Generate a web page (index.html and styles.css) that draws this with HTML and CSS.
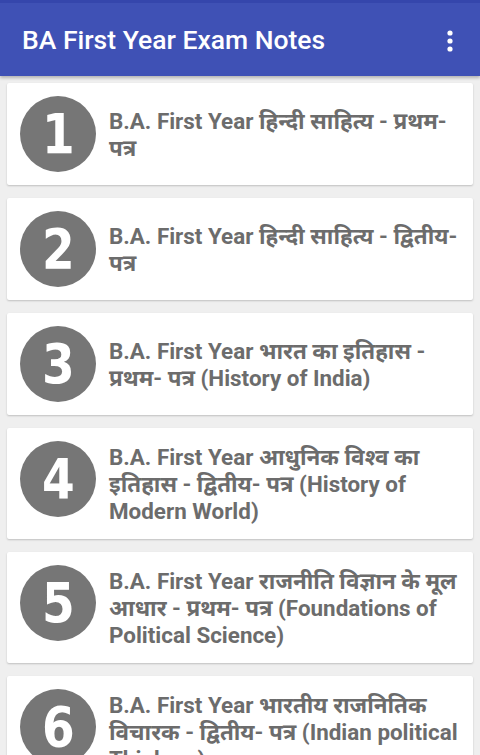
FILE: index.html
```html
<!DOCTYPE html>
<html lang="hi">
<head>
<meta charset="utf-8">
<title>BA First Year Exam Notes</title>
<link rel="stylesheet" href="styles.css">
</head>
<body>
<header class="appbar">
  <h1 class="title">BA First Year Exam Notes</h1>
  <button class="menu" aria-label="More options">
    <svg width="8" height="24" viewBox="0 0 8 24"><circle cx="4" cy="4" r="2.6" fill="#fff"/><circle cx="4" cy="12" r="2.6" fill="#fff"/><circle cx="4" cy="20" r="2.6" fill="#fff"/></svg>
  </button>
</header>
<main class="list">
  <div class="card"><div class="num"><span class="digit">1</span></div><div class="text">B.A. First Year हिन्दी साहित्य - प्रथम- पत्र</div></div>
  <div class="card"><div class="num"><span class="digit">2</span></div><div class="text">B.A. First Year हिन्दी साहित्य - द्वितीय- पत्र</div></div>
  <div class="card"><div class="num"><span class="digit">3</span></div><div class="text">B.A. First Year भारत का इतिहास - प्रथम- पत्र (History of India)</div></div>
  <div class="card"><div class="num"><span class="digit">4</span></div><div class="text">B.A. First Year आधुनिक विश्व का इतिहास - द्वितीय- पत्र (History of Modern World)</div></div>
  <div class="card"><div class="num"><span class="digit">5</span></div><div class="text">B.A. First Year राजनीति विज्ञान के मूल आधार - प्रथम- पत्र (Foundations of Political Science)</div></div>
  <div class="card"><div class="num"><span class="digit">6</span></div><div class="text">B.A. First Year भारतीय राजनितिक विचारक - द्वितीय- पत्र (Indian political Thinkers)</div></div>
</main>
</body>
</html>
```
FILE: styles.css
```css
html, body {
  margin: 0;
  padding: 0;
}
body {
  background: #efefef;
  font-family: Roboto, "Noto Sans", "Noto Sans Devanagari", sans-serif;
  width: 480px;
  height: 755px;
  overflow: hidden;
}
.appbar {
  height: 73px;
  border-top: 3px solid #3546ac;
  background: #3f51b5;
  display: flex;
  align-items: center;
  justify-content: space-between;
  padding: 0 20px 0 22px;
  box-shadow: 0 2px 3px rgba(0,0,0,0.25);
  position: relative;
  z-index: 1;
}
.title {
  margin: 0;
  color: #fff;
  font-size: 26.5px;
  font-weight: 500;
  letter-spacing: 0;
}
.menu {
  background: none;
  border: 0;
  padding: 0;
  width: 20px;
  height: 30px;
  display: flex;
  align-items: center;
  justify-content: center;
  margin-top: 2px;
}
.list {
  display: flex;
  flex-direction: column;
  gap: 13px;
  padding: 7px 7px 0 7px;
}
.card {
  background: #fff;
  display: flex;
  align-items: flex-start;
  padding: 13px;
  box-shadow: 0 1px 2px rgba(0,0,0,0.2);
  border-radius: 2px;
  flex-shrink: 0;
}
.num {
  width: 76px;
  height: 76px;
  border-radius: 50%;
  background: #767676;
  color: #fff;
  display: flex;
  align-items: center;
  justify-content: center;
  flex-shrink: 0;
}
.digit {
  display: inline-block;
  font-family: "DejaVu Sans", sans-serif;
  font-weight: bold;
  font-size: 56px;
  line-height: 1;
  transform: scaleX(0.84);
}
.text {
  align-self: center;
  margin-left: 13px;
  padding: 3px 0 1px 0;
  color: #6c6c6c;
  font-size: 22.4px;
  font-weight: 700;
  line-height: 27px;
}
```
